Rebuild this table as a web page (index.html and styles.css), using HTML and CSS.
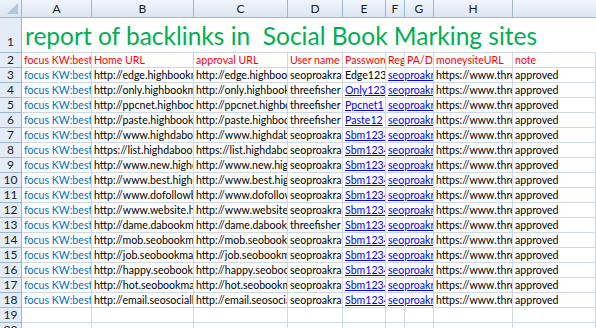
FILE: index.html
```html
<!DOCTYPE html>
<html lang="en">
	<head>
		<meta charset="UTF-8" />
		<title>report of backlinks</title>
		<link rel="stylesheet" href="styles.css">
	</head>
	<body>
		<div class="sheet" id="sheet">
			<div class="corner"></div>
			<div class="col-head">A</div>
			<div class="col-head">B</div>
			<div class="col-head">C</div>
			<div class="col-head">D</div>
			<div class="col-head">E</div>
			<div class="col-head">F</div>
			<div class="col-head">G</div>
			<div class="col-head">H</div>
			<div class="col-head last"></div>

			<div class="row-head tall">1</div>
			<div class="title-cell">report of backlinks in&nbsp; Social Book Marking sites</div>

			<div class="row-head">2</div>
			<div class="cell red">focus KW:best</div>
			<div class="cell red">Home URL</div>
			<div class="cell red">approval URL</div>
			<div class="cell red">User name</div>
			<div class="cell red">Password</div>
			<div class="cell red">Register</div>
			<div class="cell red">PA/DA</div>
			<div class="cell red">moneysiteURL</div>
			<div class="cell red">note</div>
		</div>
		<script>
			var rows = [
				["http://edge.highbookmarking.com", "seoproakram", "Edge123", false],
				["http://only.highbookmarking.com", "threefisher", "Only123-", true],
				["http://ppcnet.highbookmarking.com", "threefisher", "Ppcnet1", true],
				["http://paste.highbookmarking.com", "threefisher", "Paste12", true],
				["http://www.highdabookmarking.com", "seoproakram", "Sbm1234", true],
				["https://list.highdabookmarking.com", "seoproakram", "Sbm1234", true],
				["http://www.new.highdabookmarking.com", "seoproakram", "Sbm1234", true],
				["http://www.best.highdabookmarking.com", "seoproakram", "Sbm1234", true],
				["http://www.dofollowbookmarking.com", "seoproakram", "Sbm1234", true],
				["http://www.website.highdabookmarking.com", "seoproakram", "Sbm1234", true],
				["http://dame.dabookmarking.com", "threefisher", "Sbm1234", true],
				["http://mob.seobookmarking.com", "seoproakram", "Sbm1234", true],
				["http://job.seobookmarking.com", "seoproakram", "Sbm1234", true],
				["http://happy.seobookmarking.com", "seoproakram", "Sbm1234", true],
				["http://hot.seobookmarking.com", "seoproakram", "Sbm1234", true],
				["http://email.seosocialbookmarking.com", "seoproakram", "Sbm1234", true]
			];

			var sheet = document.getElementById("sheet");

			function add(cls, text) {
				var div = document.createElement("div");
				div.className = cls;
				div.textContent = text || "";
				sheet.appendChild(div);
				return div;
			}

			rows.forEach(function (r, i) {
				add("row-head", i + 3);
				add("cell kw", "focus KW:best");
				add("cell", r[0]);
				add("cell", r[0] + "/login");
				add("cell", r[1]);
				add(r[3] ? "cell link" : "cell", r[2]);
				add("cell link wide", "seoproakram");
				add("cell", "https://www.threefishermen.com");
				add("cell", "approved");
			});

			// empty rows at the bottom
			for (var n = 19; n <= 20; n++) {
				add("row-head", n);
				for (var c = 0; c < 9; c++) add("cell");
			}
		</script>
	</body>
</html>
```
FILE: styles.css
```css
body {
	margin: 0;
	background: #fff;
	overflow: hidden;
	font-family: Lato, "Open Sans", sans-serif;
	font-size: 10.6px;
	color: #000;
}
.sheet {
	display: grid;
	grid-template-columns: 22px 70px 102px 94px 55px 43px 19px 29px 79px 83px;
	grid-template-rows: 18px 35px;
	grid-auto-rows: 15px;
	width: 596px;
}
.corner {
	position: relative;
	background: linear-gradient(#eef3fa, #dbe5f3);
	border-right: 1px solid #9eb6ce;
	border-bottom: 1px solid #9eb6ce;
}
.corner::after {
	/* little select-all triangle */
	content: "";
	position: absolute;
	right: 3px;
	bottom: 3px;
	border-left: 11px solid transparent;
	border-bottom: 11px solid #b4c6dc;
}
.col-head {
	background: linear-gradient(#f1f5fb, #dce6f4);
	border-right: 1px solid #9eb6ce;
	border-bottom: 1px solid #9eb6ce;
	text-align: center;
	font-size: 12px;
	line-height: 17px;
	color: #1c1c1c;
}
.col-head.last {
	border-right: none;
}
.row-head {
	background: #e4ecf7;
	border-right: 1px solid #9eb6ce;
	border-bottom: 1px solid #9eb6ce;
	display: flex;
	align-items: flex-end;
	justify-content: center;
	font-size: 12px;
	line-height: 14px;
	color: #1c1c1c;
}
.row-head.tall {
	padding-bottom: 3px;
}
.title-cell {
	grid-column: 2 / -1;
	border-bottom: 1px solid #d0d7e5;
	display: flex;
	align-items: flex-end;
	padding: 0 0 1px 3px;
	font-size: 24.5px;
	line-height: 30px;
	color: #00b050;
	white-space: nowrap;
}
.cell {
	border-right: 1px solid #d0d7e5;
	border-bottom: 1px solid #d0d7e5;
	padding: 0 2px;
	line-height: 14px;
	white-space: nowrap;
	overflow: hidden;
}
.red {
	color: #f00;
}
.kw {
	color: #0070c0;
}
.link {
	color: #00f;
	text-decoration: underline;
}
.wide {
	grid-column: span 2;
}
```
